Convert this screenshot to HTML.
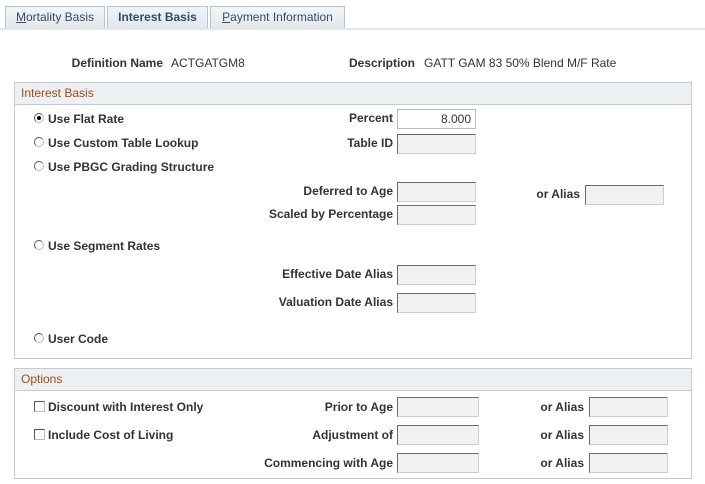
<!DOCTYPE html>
<html><head><meta charset="utf-8"><style>
*{margin:0;padding:0;box-sizing:border-box}
body{width:705px;height:484px;background:#fff;position:relative;overflow:hidden;font-family:"Liberation Sans",Arial,sans-serif;font-size:12px;color:#333}
.a{position:absolute;white-space:nowrap}
.b{font-weight:bold}
.r{text-align:right}
.tab{position:absolute;top:6px;height:22px;border:1px solid #b8c3cf;border-bottom:none;background:linear-gradient(#f4f6f8,#e2e7ec);color:#3a4a60;font-size:12px;line-height:20px;text-align:center}
.tab.act{background:linear-gradient(#f0f4f8,#dfe7ef);font-weight:bold;color:#3a4a5f}
.box{position:absolute;left:14px;width:678px;border:1px solid #c8cacc}
.hd{height:22px;background:#edf0f3;border-bottom:1px solid #c8cacc;color:#a04d14;font-size:12px;line-height:21px;padding-left:6px}
.in{position:absolute;width:79px;height:20px;background:#f1f1f1;border:1px solid #ccc;border-top-color:#6a6a6a;border-left-color:#6a6a6a}
.rad{position:absolute;width:10px;height:10px;border-radius:50%;border:1px solid #555;border-right-color:#bbb;border-bottom-color:#bbb;background:#fff}
.chk{position:absolute;width:11px;height:11px;border:1px solid #555;border-right-color:#bbb;border-bottom-color:#bbb;background:#fff}
.lb{position:absolute;font-weight:bold;text-align:right;white-space:nowrap;width:300px}
</style></head><body>
<div class="tab" style="left:5px;width:100px"><u>M</u>ortality Basis</div>
<div class="tab act" style="left:107px;width:101px">Interest Basis</div>
<div class="tab" style="left:210px;width:135px"><u>P</u>ayment Information</div>
<div class="a" style="left:0;top:28px;width:705px;height:2px;background:#dfe6ee"></div>

<div class="lb" style="left:-137px;top:56px">Definition Name</div>
<div class="a" style="left:171px;top:56px">ACTGATGM8</div>
<div class="lb" style="left:115px;top:56px">Description</div>
<div class="a" style="left:424px;top:56px">GATT GAM 83 50% Blend M/F Rate</div>

<div class="box" style="top:82px;height:277px"><div class="hd">Interest Basis</div></div>

<div class="rad" style="left:34px;top:113px"><div style="position:absolute;left:2px;top:2px;width:4px;height:4px;border-radius:50%;background:#000"></div></div>
<div class="a b" style="left:48px;top:112px">Use Flat Rate</div>
<div class="rad" style="left:34px;top:137px"></div>
<div class="a b" style="left:48px;top:136px">Use Custom Table Lookup</div>
<div class="rad" style="left:34px;top:161px"></div>
<div class="a b" style="left:48px;top:160px">Use PBGC Grading Structure</div>
<div class="rad" style="left:34px;top:240px"></div>
<div class="a b" style="left:48px;top:239px">Use Segment Rates</div>
<div class="rad" style="left:34px;top:333px"></div>
<div class="a b" style="left:48px;top:332px">User Code</div>

<div class="lb" style="left:93px;top:111px">Percent</div>
<div class="in" style="left:397px;top:109px;background:#fff;border-color:#bbb;text-align:right;padding-right:4px;line-height:18px">8.000</div>
<div class="lb" style="left:93px;top:136px">Table ID</div>
<div class="in" style="left:397px;top:134px"></div>
<div class="lb" style="left:93px;top:184px">Deferred to Age</div>
<div class="in" style="left:397px;top:182px"></div>
<div class="lb" style="left:280px;top:187px">or Alias</div>
<div class="in" style="left:585px;top:185px"></div>
<div class="lb" style="left:93px;top:207px">Scaled by Percentage</div>
<div class="in" style="left:397px;top:205px"></div>
<div class="lb" style="left:93px;top:267px">Effective Date Alias</div>
<div class="in" style="left:397px;top:265px"></div>
<div class="lb" style="left:93px;top:295px">Valuation Date Alias</div>
<div class="in" style="left:397px;top:293px"></div>

<div class="box" style="top:368px;height:111px"><div class="hd">Options</div></div>
<div class="chk" style="left:34px;top:401px"></div>
<div class="a b" style="left:48px;top:400px">Discount with Interest Only</div>
<div class="chk" style="left:34px;top:429px"></div>
<div class="a b" style="left:48px;top:428px">Include Cost of Living</div>

<div class="lb" style="left:93px;top:400px">Prior to Age</div>
<div class="in" style="left:397px;top:397px;width:82px"></div>
<div class="lb" style="left:284px;top:400px">or Alias</div>
<div class="in" style="left:589px;top:397px"></div>
<div class="lb" style="left:93px;top:428px">Adjustment of</div>
<div class="in" style="left:397px;top:425px;width:82px"></div>
<div class="lb" style="left:284px;top:428px">or Alias</div>
<div class="in" style="left:589px;top:425px"></div>
<div class="lb" style="left:93px;top:456px">Commencing with Age</div>
<div class="in" style="left:397px;top:453px;width:82px"></div>
<div class="lb" style="left:284px;top:456px">or Alias</div>
<div class="in" style="left:589px;top:453px"></div>
</body></html>
